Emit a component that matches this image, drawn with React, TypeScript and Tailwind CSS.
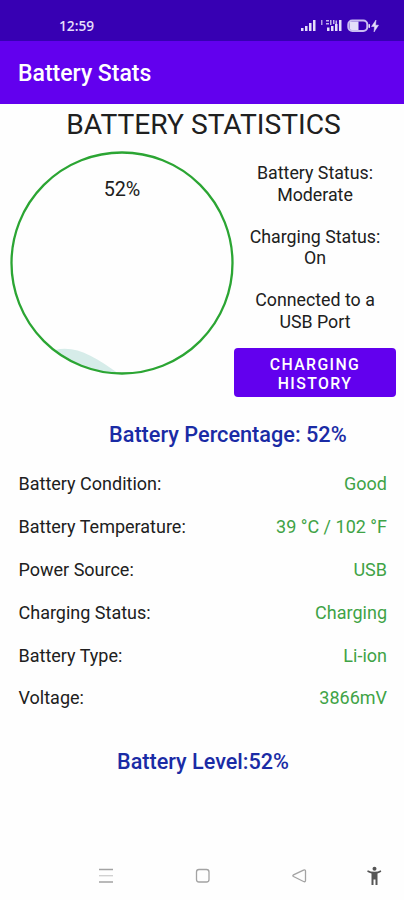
const stats = [
  { label: "Battery Condition:", value: "Good" },
  { label: "Battery Temperature:", value: "39 °C / 102 °F" },
  { label: "Power Source:", value: "USB" },
  { label: "Charging Status:", value: "Charging" },
  { label: "Battery Type:", value: "Li-ion" },
  { label: "Voltage:", value: "3866mV" },
];

function StatusIcons() {
  return (
    <svg width="80" height="16" viewBox="0 0 80 16" fill="#e4defa">
      {/* first SIM */}
      <rect x="1" y="10" width="2.500" height="3" />
      <rect x="5" y="8" width="2.500" height="5" />
      <rect x="9" y="5" width="2.500" height="8" />
      <rect x="13" y="2" width="2.500" height="11" />
      {/* second SIM with network label */}
      <rect x="21" y="2" width="1.500" height="5" opacity="0.7" />
      <path d="M26 2h3v1.500h-3zM26 5h3v1.500h-3zM30 2h1.500v5H30zM33 2h1.500v4H33zM35.500 2.500H37V7h-1.500z" opacity="0.8" />
      <rect x="27" y="9.500" width="2.500" height="3.500" />
      <rect x="31" y="8" width="2.500" height="5" />
      <rect x="35" y="6" width="2.500" height="7" />
      <rect x="39" y="2" width="2.500" height="11" />
      {/* battery */}
      <rect x="48.300" y="2.500" width="19" height="10.500" rx="4" fill="none" stroke="#c9bdf2" strokeWidth="2" />
      <path d="M51.500 3.500H58.500v8.500h-7a2 2 0 0 1-2-2V5.500a2 2 0 0 1 2-2z" />
      <rect x="68.500" y="6" width="1.500" height="4" rx="0.700" />
      <path d="M76 2l-4.500 6.500h3L74 14l4.500-6.800h-3z" stroke="#e4defa" strokeWidth="0.500" />
    </svg>
  );
}

export default function App() {
  return (
    <div className="flex h-[900px] w-[404px] flex-col overflow-hidden bg-[#fefefe] font-[Roboto,sans-serif] text-[#202020]">
      {/* Status bar */}
      <div className="flex h-[41px] items-start justify-between bg-[#3700b3] pt-[18px] pr-[24px] pl-[59px]">
        <span className="font-['Open_Sans',sans-serif] text-[13.700px] leading-[16px] font-semibold text-[#e4defa]">12:59</span>
        <StatusIcons />
      </div>

      {/* App bar */}
      <header className="flex h-[63px] items-center bg-[#6200ee] pt-[4px] pl-[18px]">
        <h1 className="text-[23px] font-medium text-white">Battery Stats</h1>
      </header>

      <h2 className="h-[42px] pl-[3px] text-center text-[28.200px] leading-[41px]">BATTERY STATISTICS</h2>

      <div className="flex h-[256px]">
        {/* Wave gauge */}
        <div className="relative w-[234px]">
          <svg className="absolute top-[5px] left-[10px]" width="224" height="224" viewBox="0 0 224 224">
            <path d="M45 199C66 194 85 206 107 221.500C82 221 59 212 45 199Z" fill="#d6ece9" />
            <circle cx="112" cy="112" r="110.500" fill="none" stroke="#2ba533" strokeWidth="2.300" />
          </svg>
          <p className="pt-[32px] pl-[10px] text-center text-[19.800px] leading-[24px]">52%</p>
        </div>

        <div className="flex w-[162px] flex-col text-center text-[17.800px] leading-[21.500px]">
          <p className="mt-[16px]">Battery Status:<br />Moderate</p>
          <p className="mt-[20.500px]">Charging Status:<br />On</p>
          <p className="mt-[20.500px]">Connected to a<br />USB Port</p>
          <button className="mt-[16px] h-[49px] rounded-[4px] bg-[#6200ee] px-4 pt-[2px] text-[15.800px] leading-[19px] font-medium tracking-[1.400px] text-white">
            CHARGING HISTORY
          </button>
        </div>
      </div>

      <h3 className="mt-[20px] pl-[109px] text-[21.700px] leading-[26px] font-medium text-[#1a2ba5]">Battery Percentage: 52%</h3>

      <div className="mt-[14.500px] pr-[17px] pl-[18.500px]">
        {stats.map((s) => (
          <div key={s.label} className="flex h-[42.800px] items-center justify-between text-[18px]">
            <span>{s.label}</span>
            <span className="text-[#3fa346]">{s.value}</span>
          </div>
        ))}
      </div>

      <h3 className="mt-[30px] pl-[2px] text-center text-[21.600px] leading-[26px] font-medium text-[#1a2ba5]">Battery Level:52%</h3>

      {/* Navigation bar */}
      <nav className="mt-auto h-[48px]">
        <svg width="404" height="48" viewBox="0 0 404 48" fill="none" stroke="#a3a3a3" strokeWidth="1.300">
          <path d="M99 17.500h14M99 30h14" />
          <path d="M99 23.700h14" stroke="#cfcfcf" />
          <rect x="196.500" y="17.500" width="12.500" height="12.500" rx="2.500" />
          <path d="M303.500 18.200l-10 4.700q-1.300.8 0 1.600l10 5q2 .8 2-1V19q0-1.600-2-.8z" />
          <g fill="#555" stroke="none">
            <circle cx="374.500" cy="16.800" r="2" />
            <path d="M367.800 18.300q3 1.500 6.700 1.500t6.200-1.500l.6 1.500q-1.800 1.200-3.800 1.700V33h-2v-5.500h-2V33h-2V21.500q-2.300-.5-4.300-1.700z" />
          </g>
        </svg>
      </nav>
    </div>
  );
}
